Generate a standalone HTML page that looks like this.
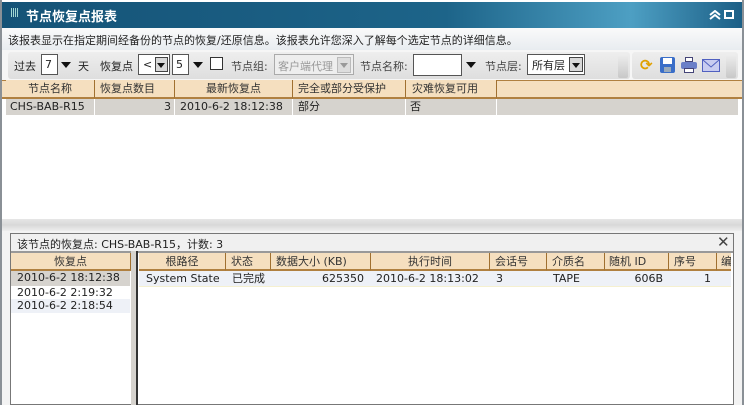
<!DOCTYPE html>
<html><head><meta charset="utf-8"><style>
*{margin:0;padding:0;box-sizing:border-box}
body{width:744px;height:405px;overflow:hidden;background:#fff;font-family:"DejaVu Sans","Noto Sans CJK SC",sans-serif;font-size:11px;color:#222;position:relative}
.a{position:absolute}
.hd{position:absolute;background:#f5dfbf;border-right:1px solid #a07030;border-bottom:2px solid #b08040;height:19px;line-height:17px;color:#333;white-space:nowrap;overflow:hidden}
.c{position:absolute;height:16px;line-height:16px;white-space:nowrap;overflow:hidden}
.sel{background:#d6d3ce}
.box{position:absolute;background:#fff;border:1px solid #555;height:19px}
.dd{position:absolute;width:0;height:0;border-left:5px solid transparent;border-right:5px solid transparent;border-top:6px solid #111}
.grip{position:absolute;width:10px;height:24px;background:linear-gradient(#eee,#c8c8c8);border-radius:2px}
</style></head><body>
<div class="a" style="left:0;top:0;width:744px;height:405px;border:2px solid #8a9096;border-top:none"></div>
<div class="a" style="left:2px;top:2px;width:740px;height:26px;background:linear-gradient(90deg,#155377 0%,#1d6489 60%,#4d9fc3 85%,#1c5f86 100%)"></div>
<div class="a" style="left:10px;top:8px;color:#cfe;font-size:9px;letter-spacing:-1px">||||</div>
<div class="a" style="left:26px;top:6px;color:#fff;font-weight:bold;font-size:13px">节点恢复点报表</div>
<svg class="a" style="left:709px;top:10px" width="12" height="10"><path d="M1 5L6 1L11 5M1 9L6 5L11 9" fill="none" stroke="#fff" stroke-width="2"/></svg>
<div class="a" style="left:724px;top:10px;width:10px;height:9px;border:2px solid #fff"></div>
<div class="a" style="left:2px;top:28px;width:740px;height:22px;background:linear-gradient(#fafafa,#e8ecf0)"></div>
<div class="a" style="left:8px;top:32px">该报表显示在指定期间经备份的节点的恢复/还原信息。该报表允许您深入了解每个选定节点的详细信息。</div>
<div class="a" style="left:2px;top:50px;width:740px;height:30px;background:#f6f6f6"></div>
<div class="a" style="left:8px;top:52px;width:622px;height:27px;background:linear-gradient(#eeeeee,#dedede);border-radius:3px"></div>
<div class="a" style="left:632px;top:52px;width:106px;height:27px;background:linear-gradient(#eeeeee,#dedede);border-radius:3px"></div>
<div class="a" style="left:14px;top:58px">过去</div>
<div class="box" style="left:41px;top:54px;width:17px;height:21px;padding-left:3px;line-height:19px">7</div>
<div class="dd" style="left:61px;top:62px"></div>
<div class="a" style="left:78px;top:58px">天</div>
<div class="a" style="left:100px;top:58px">恢复点</div>
<div class="box" style="left:138px;top:54px;width:32px;height:21px;padding-left:4px;line-height:19px">&lt;<div class="a" style="left:16px;top:2px;width:13px;height:15px;background:#d8d8d8;border:1px solid #444"><div class="dd" style="left:1px;top:5px;border-width:5px 4px 0"></div></div></div>
<div class="box" style="left:172px;top:54px;width:17px;height:21px;padding-left:3px;line-height:19px">5</div>
<div class="dd" style="left:193px;top:62px"></div>
<div class="a" style="left:210px;top:57px;width:13px;height:13px;border:1px solid #333;background:#fff"></div>
<div class="a" style="left:231px;top:58px;color:#444">节点组:</div>
<div class="a" style="left:274px;top:54px;width:80px;height:21px;border:1px solid #aaa;background:#eee;color:#999;padding:3px 3px">客户端代理<div class="a" style="left:62px;top:2px;width:14px;height:16px;background:#ddd;border:1px solid #bbb"><div class="dd" style="left:2px;top:5px;border-width:5px 4px 0;border-top-color:#999"></div></div></div>
<div class="a" style="left:360px;top:58px;color:#444">节点名称:</div>
<div class="box" style="left:413px;top:54px;width:49px;height:22px"></div>
<div class="dd" style="left:466px;top:62px"></div>
<div class="a" style="left:485px;top:58px;color:#444">节点层:</div>
<div class="box" style="left:527px;top:54px;width:58px;height:21px;padding:2px 4px">所有层<div class="a" style="left:41px;top:2px;width:14px;height:15px;background:#d8d8d8;border:1px solid #444"><div class="dd" style="left:2px;top:5px;border-width:5px 4px 0"></div></div></div>
<div class="grip" style="left:618px;top:54px"></div>
<div class="grip" style="left:726px;top:54px"></div>
<div class="a" style="left:640px;top:56px;color:#e0a000;font-weight:bold;font-size:15px">⟳</div>
<div class="a" style="left:660px;top:57px;width:15px;height:16px;background:#3a6ec8;border-radius:2px"><div class="a" style="left:3px;top:1px;width:9px;height:6px;background:#fff"></div><div class="a" style="left:4px;top:10px;width:7px;height:5px;background:#9ab"></div></div>
<div class="a" style="left:681px;top:57px;width:16px;height:16px"><div class="a" style="left:4px;top:0;width:8px;height:5px;background:#fff;border:1px solid #447"></div><div class="a" style="left:0;top:5px;width:16px;height:7px;background:#6a7fc8;border-radius:2px"></div><div class="a" style="left:3px;top:11px;width:10px;height:5px;background:#fff;border:1px solid #447"></div></div>
<svg class="a" style="left:702px;top:59px" width="18" height="13"><rect x="0.5" y="0.5" width="17" height="12" fill="#c8ccf0" stroke="#5060c0"/><path d="M1 1L9 8L17 1" fill="none" stroke="#5060c0"/></svg>
<div class="a" style="left:2px;top:80px;width:740px;height:19px;background:#f5dfbf;border-top:1px solid #b08040;border-bottom:2px solid #b08040"></div>
<div class="hd" style="left:6px;top:80px;width:89px;text-align:center">节点名称</div>
<div class="hd" style="left:95px;top:80px;width:80px;padding-left:5px">恢复点数目</div>
<div class="hd" style="left:175px;top:80px;width:118px;text-align:center">最新恢复点</div>
<div class="hd" style="left:293px;top:80px;width:113px;padding-left:5px">完全或部分受保护</div>
<div class="hd" style="left:406px;top:80px;width:91px;padding-left:6px">灾难恢复可用</div>
<div class="a sel" style="left:6px;top:99px;width:732px;height:16px"></div>
<div class="c" style="left:10px;top:99px">CHS-BAB-R15</div>
<div class="a" style="left:94px;top:99px;width:1px;height:16px;background:#fff"></div>
<div class="c" style="left:95px;top:99px;width:76px;text-align:right">3</div>
<div class="a" style="left:174px;top:99px;width:1px;height:16px;background:#fff"></div>
<div class="c" style="left:180px;top:99px">2010-6-2 18:12:38</div>
<div class="a" style="left:292px;top:99px;width:1px;height:16px;background:#fff"></div>
<div class="c" style="left:298px;top:99px">部分</div>
<div class="a" style="left:405px;top:99px;width:1px;height:16px;background:#fff"></div>
<div class="c" style="left:410px;top:99px">否</div>
<div class="a" style="left:496px;top:99px;width:1px;height:16px;background:#fff"></div>
<div class="a" style="left:2px;top:219px;width:740px;height:12px;background:linear-gradient(#e6e6e6,#d8d8d8 50%,#eee)"></div>
<div class="a" style="left:2px;top:231px;width:740px;height:174px;background:#f3f3f3"></div>
<div class="a" style="left:10px;top:233px;width:724px;height:172px;border:1px solid #777;background:#fff"></div>
<div class="a" style="left:11px;top:234px;width:722px;height:17px;background:#f0f0f0"></div>
<div class="a" style="left:17px;top:236px">该节点的恢复点: CHS-BAB-R15，计数: 3</div>
<div class="a" style="left:717px;top:233px;font-size:15px;font-weight:bold;color:#444">✕</div>
<div class="a" style="left:11px;top:251px;width:722px;height:2px;background:#999"></div>
<div class="a" style="left:131px;top:251px;width:5px;height:154px;background:#d6d3ce"></div>
<div class="a" style="left:136px;top:251px;width:2px;height:154px;background:#333"></div>
<div class="hd" style="left:11px;top:253px;width:120px;text-align:center;height:18px">恢复点</div>
<div class="a sel" style="left:11px;top:271px;width:119px;height:15px"></div>
<div class="c" style="left:17px;top:270px">2010-6-2 18:12:38</div>
<div class="c" style="left:17px;top:285px">2010-6-2 2:19:32</div>
<div class="a" style="left:11px;top:299px;width:119px;height:14px;background:#eef1f7"></div>
<div class="c" style="left:17px;top:298px">2010-6-2 2:18:54</div>
<div class="hd" style="left:139px;top:253px;width:87px;text-align:center;height:18px">根路径</div>
<div class="hd" style="left:226px;top:253px;width:45px;padding-left:5px;height:18px">状态</div>
<div class="hd" style="left:271px;top:253px;width:100px;padding-left:5px;height:18px">数据大小 (KB)</div>
<div class="hd" style="left:371px;top:253px;width:119px;text-align:center;height:18px">执行时间</div>
<div class="hd" style="left:490px;top:253px;width:57px;padding-left:5px;height:18px">会话号</div>
<div class="hd" style="left:547px;top:253px;width:58px;padding-left:5px;height:18px">介质名</div>
<div class="hd" style="left:605px;top:253px;width:64px;padding-left:4px;height:18px">随机 ID</div>
<div class="hd" style="left:669px;top:253px;width:48px;padding-left:5px;height:18px">序号</div>
<div class="hd" style="left:717px;top:253px;width:14px;padding-left:4px;height:18px;border-right:none">编</div>
<div class="a" style="left:139px;top:271px;width:592px;height:16px;background:#eef1f7;border-bottom:1px solid #f5f0d0"></div>
<div class="c" style="left:146px;top:271px">System State</div>
<div class="c" style="left:232px;top:271px">已完成</div>
<div class="c" style="left:271px;top:271px;width:93px;text-align:right">625350</div>
<div class="c" style="left:376px;top:271px">2010-6-2 18:13:02</div>
<div class="c" style="left:496px;top:271px">3</div>
<div class="c" style="left:553px;top:271px">TAPE</div>
<div class="c" style="left:605px;top:271px;width:58px;text-align:right">606B</div>
<div class="c" style="left:669px;top:271px;width:42px;text-align:right">1</div>
</body></html>
